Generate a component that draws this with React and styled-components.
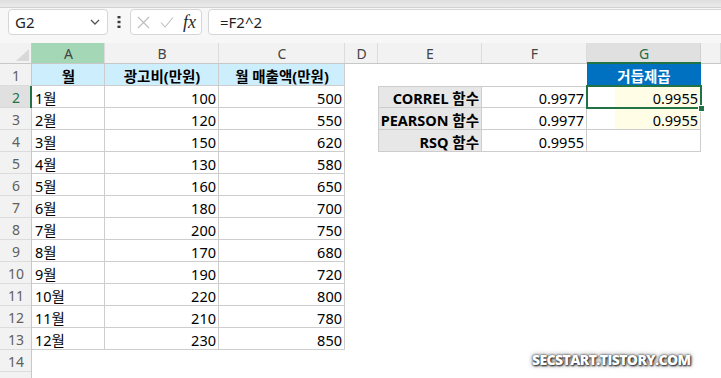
import styled, { createGlobalStyle } from "styled-components";

const GlobalStyle = createGlobalStyle`
  body {
    margin: 0;
    background: #fff;
    font-family: "Noto Sans", "Noto Sans CJK KR", sans-serif;
  }
`;

const Window = styled.div`
  position: relative;
  width: 721px;
  height: 378px;
  overflow: hidden;
  display: flex;
  flex-direction: column;
  background: #fff;
`;

const TopStrip = styled.div`
  flex-shrink: 0;
  height: 8px;
  box-sizing: border-box;
  background: linear-gradient(#dedede, #ebebeb);
  border-bottom: 1px solid #d2d2d2;
`;

const FormulaBar = styled.div`
  flex-shrink: 0;
  height: 35px;
  box-sizing: border-box;
  display: flex;
  align-items: flex-start;
  padding: 1px 0 0 8px;
  background: #f7f7f7;
`;

const Box = styled.div`
  height: 26px;
  box-sizing: border-box;
  background: #fff;
  border: 1px solid #d6d6d6;
  border-radius: 4px;
  display: flex;
  align-items: center;
`;

const NameBox = styled(Box)`
  width: 100px;
  padding: 0 7px 0 6px;
  justify-content: space-between;
  font-size: 15px;
  color: #1f1f1f;
`;

const Dots = styled.div`
  width: 22px;
  height: 26px;
  display: flex;
  align-items: center;
  justify-content: center;
`;

const FxBox = styled(Box)`
  width: 72px;
  padding: 0 4px 0 6px;
  justify-content: space-between;
`;

const FxLabel = styled.span`
  font-family: "Liberation Serif", serif;
  font-style: italic;
  font-size: 18px;
  color: #2a2a2a;
  padding-right: 1px;
`;

const FormulaInput = styled(Box)`
  flex: 1;
  margin-left: 6px;
  margin-right: -10px;
  padding-left: 11px;
  font-size: 15px;
  color: #1f1f1f;
`;

const Sheet = styled.div`
  flex: 1;
  min-height: 0;
  overflow: hidden;
  display: grid;
  grid-template-columns: 32px 73px 114px 126px 33px 104px 105px 114px 1fr;
  grid-template-rows: 21px repeat(15, 22px);
  font-size: 14.5px;
  color: #000;
`;

const Corner = styled.div`
  position: relative;
  background: #f2f2f2;
  box-shadow: inset -1px -1px 0 #c8c8c8;
  &::after {
    content: "";
    position: absolute;
    right: 3px;
    bottom: 3px;
    border-style: solid;
    border-width: 0 0 12px 13px;
    border-color: transparent transparent #d8d8d8 transparent;
  }
`;

const ColHead = styled.div`
  display: flex;
  align-items: center;
  justify-content: center;
  font-size: 14px;
  color: ${(p) => (p.$current ? "#1d6b40" : "#444")};
  background: ${(p) => (p.$picked ? "#a4d7b6" : p.$current ? "#e0e0e0" : "#f2f2f2")};
  box-shadow: ${(p) =>
    p.$current
      ? "inset 0 -2px 0 #217346, inset -1px 0 0 #d0d0d0"
      : "inset 0 -1px 0 #c8c8c8, inset -1px 0 0 #dcdcdc"};
`;

const RowHead = styled.div`
  display: flex;
  align-items: center;
  justify-content: center;
  padding-top: 1px;
  font-size: 14px;
  color: ${(p) => (p.$current ? "#217346" : "#5f5f5f")};
  background: ${(p) => (p.$current ? "#e0e0e0" : "#f2f2f2")};
  box-shadow: ${(p) =>
    p.$current
      ? "inset -2px 0 0 #217346, inset 0 -1px 0 #d8d8d8"
      : "inset -1px 0 0 #c8c8c8, inset 0 -1px 0 #dcdcdc"};
`;

const edge = {
  t: "inset 0 1px 0 #cdcdcd",
  r: "inset -1px 0 0 #cdcdcd",
  b: "inset 0 -1px 0 #cdcdcd",
  l: "inset 1px 0 0 #cdcdcd",
};

const Cell = styled.div`
  position: relative;
  display: flex;
  align-items: center;
  padding: 1px 3px 0;
  white-space: nowrap;
  justify-content: ${(p) =>
    p.$align === "right" ? "flex-end" : p.$align === "center" ? "center" : "flex-start"};
  font-weight: ${(p) => (p.$bold ? 700 : 400)};
  color: ${(p) => p.$color || "#000"};
  background: ${(p) => p.$fill || "transparent"};
  box-shadow: ${(p) =>
    p.$lines ? p.$lines.split("").map((k) => edge[k]).join(", ") : "none"};
  ${(p) =>
    p.$selected &&
    `
    z-index: 2;
    &::after {
      content: "";
      position: absolute;
      inset: -1px;
      border: 2px solid #217346;
    }
    &::before {
      content: "";
      position: absolute;
      right: -4px;
      bottom: -4px;
      width: 5px;
      height: 5px;
      background: #217346;
      border: 1px solid #fff;
      z-index: 3;
    }
  `}
`;

const Watermark = styled.div`
  position: absolute;
  left: 532px;
  top: 350px;
  font-family: "Open Sans", "Noto Sans", sans-serif;
  font-weight: 800;
  font-size: 14px;
  letter-spacing: -0.6px;
  color: #fff;
  text-shadow: 0 0 2px #333, 1px 1px 2px #222, 0 0 5px #666;
`;

const Chevron = () => (
  <svg width="10" height="6" viewBox="0 0 10 6">
    <path d="M1 1l4 4 4-4" fill="none" stroke="#555" strokeWidth="1.3" />
  </svg>
);

const VDots = () => (
  <svg width="4" height="12" viewBox="0 0 4 12">
    <rect x="0.5" y="0" width="3" height="2.4" fill="#3a3a3a" />
    <rect x="0.5" y="4.8" width="3" height="2.4" fill="#3a3a3a" />
    <rect x="0.5" y="9.6" width="3" height="2.4" fill="#3a3a3a" />
  </svg>
);

const Cross = () => (
  <svg width="13" height="13" viewBox="0 0 13 13">
    <path d="M1 1l11 11M12 1L1 12" stroke="#bdbdbd" strokeWidth="1.1" fill="none" />
  </svg>
);

const Check = () => (
  <svg width="14" height="11" viewBox="0 0 14 11">
    <path d="M1 5.5l4 4.5 8-9.5" stroke="#bdbdbd" strokeWidth="1.1" fill="none" />
  </svg>
);

const cols = ["A", "B", "C", "D", "E", "F", "G", ""];

const sales = [
  [100, 500], [120, 550], [150, 620], [130, 580], [160, 650], [180, 700],
  [200, 750], [170, 680], [190, 720], [220, 800], [210, 780], [230, 850],
];

const blue = "#cdeefc";
const gray = "#e7e7e7";
const yellow = "linear-gradient(to right, transparent 28px, #fffde6 28px)";

const stats = [
  ["CORREL 함수", "0.9977", "0.9955"],
  ["PEARSON 함수", "0.9977", "0.9955"],
  ["RSQ 함수", "0.9955", ""],
];

function rowCells(r) {
  const empty = {};
  const cells = Array.from({ length: 8 }, () => empty);
  if (r === 1) {
    cells[0] = { text: "월", $align: "center", $bold: true, $fill: blue, $lines: "rb" };
    cells[1] = { text: "광고비(만원)", $align: "center", $bold: true, $fill: blue, $lines: "rb" };
    cells[2] = { text: "월 매출액(만원)", $align: "center", $bold: true, $fill: blue, $lines: "rb" };
    cells[6] = { text: "거듭제곱", $align: "center", $bold: true, $fill: "#0070c0", $color: "#fff" };
  }
  if (r >= 2 && r <= 13) {
    const [ad, rev] = sales[r - 2];
    cells[0] = { text: `${r - 1}월`, $lines: "rb" };
    cells[1] = { text: ad, $align: "right", $lines: "rb" };
    cells[2] = { text: rev, $align: "right", $lines: "rb" };
  }
  if (r >= 2 && r <= 4) {
    const [label, f, g] = stats[r - 2];
    const top = r === 2 ? "t" : "";
    cells[4] = { text: label, $align: "right", $bold: true, $fill: gray, $lines: "lrb" + top };
    cells[5] = { text: f, $align: "right", $lines: "rb" + top };
    cells[6] = {
      text: g,
      $align: "right",
      $lines: "rb",
      $fill: g ? yellow : undefined,
      $selected: r === 2,
    };
  }
  return cells;
}

const App = () => {
  const rows = Array.from({ length: 15 }, (_, i) => i + 1);
  return (
    <Window>
      <GlobalStyle />
      <TopStrip />
      <FormulaBar>
        <NameBox>
          <span>G2</span>
          <Chevron />
        </NameBox>
        <Dots>
          <VDots />
        </Dots>
        <FxBox>
          <Cross />
          <Check />
          <FxLabel>fx</FxLabel>
        </FxBox>
        <FormulaInput>=F2^2</FormulaInput>
      </FormulaBar>
      <Sheet>
        <Corner />
        {cols.map((c, i) => (
          <ColHead key={i} $picked={c === "A"} $current={c === "G"}>
            {c}
          </ColHead>
        ))}
        {rows.map((r) => [
          <RowHead key={`h${r}`} $current={r === 2}>
            {r < 15 ? r : ""}
          </RowHead>,
          ...rowCells(r).map((c, i) => {
            const { text, ...rest } = c;
            return (
              <Cell key={`${r}-${i}`} {...rest}>
                {text}
              </Cell>
            );
          }),
        ])}
      </Sheet>
      <Watermark>SECSTART.TISTORY.COM</Watermark>
    </Window>
  );
};

export default App;
